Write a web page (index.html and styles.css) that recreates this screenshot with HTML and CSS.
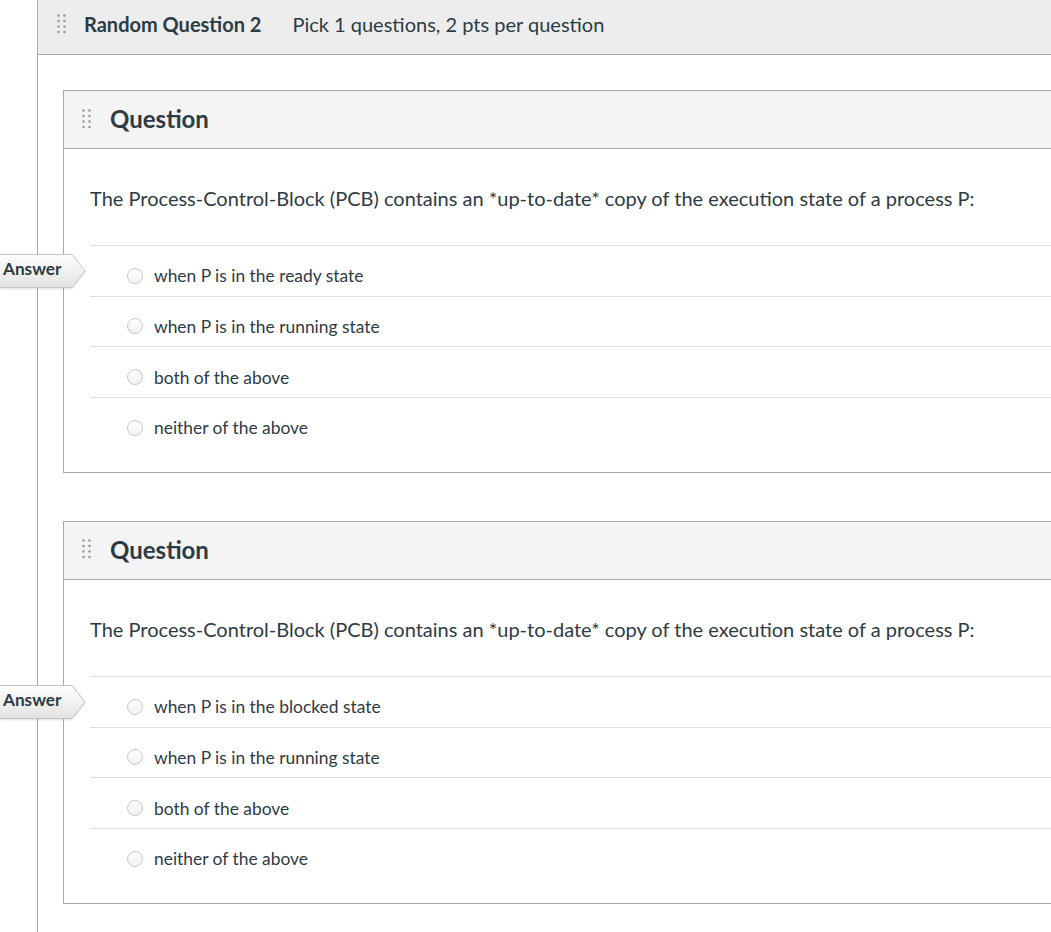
FILE: index.html
```html
<!DOCTYPE html>
<html>
<head>
<meta charset="utf-8">
<link rel="stylesheet" href="styles.css">
</head>
<body>
<div class="group">
  <div class="group-header">
    <svg class="handle" width="9" height="20" viewBox="0 0 9 20"><g fill="#959ba3"><circle cx="1.5" cy="1.5" r="1.3"/><circle cx="7.5" cy="1.5" r="1.3"/><circle cx="1.5" cy="7" r="1.3"/><circle cx="7.5" cy="7" r="1.3"/><circle cx="1.5" cy="12.5" r="1.3"/><circle cx="7.5" cy="12.5" r="1.3"/><circle cx="1.5" cy="18" r="1.3"/><circle cx="7.5" cy="18" r="1.3"/></g></svg>
    <span class="group-title">Random Question 2</span>
    <span class="group-info">Pick 1 questions, 2 pts per question</span>
  </div>
  <div class="group-body">
    <div class="question">
      <div class="q-header">
        <svg class="handle" width="9" height="20" viewBox="0 0 9 20"><g fill="#959ba3"><circle cx="1.5" cy="1.5" r="1.3"/><circle cx="7.5" cy="1.5" r="1.3"/><circle cx="1.5" cy="7" r="1.3"/><circle cx="7.5" cy="7" r="1.3"/><circle cx="1.5" cy="12.5" r="1.3"/><circle cx="7.5" cy="12.5" r="1.3"/><circle cx="1.5" cy="18" r="1.3"/><circle cx="7.5" cy="18" r="1.3"/></g></svg>
        <span class="q-title">Question</span>
      </div>
      <div class="q-body">
        <p class="q-text">The Process-Control-Block (PCB) contains an *up-to-date* copy of the execution state of a process P:</p>
        <div class="answers">
          <div class="answer-label">
            <svg class="label-bg" width="86" height="34" viewBox="0 0 86 34"><defs><linearGradient id="lg1" x1="0" y1="0" x2="0" y2="1"><stop offset="0" stop-color="#ffffff"/><stop offset="1" stop-color="#e2e2e2"/></linearGradient></defs><path d="M-2 0.5 H72 L85 17 L72 33.5 H-2 Z" fill="url(#lg1)" stroke="#c4c4c4" stroke-width="1"/></svg>
            <span class="label-text">Answer</span>
          </div>
          <div class="answer"><span class="radio"></span><span class="a-text">when P is in the ready state</span></div>
          <div class="answer"><span class="radio"></span><span class="a-text">when P is in the running state</span></div>
          <div class="answer"><span class="radio"></span><span class="a-text">both of the above</span></div>
          <div class="answer"><span class="radio"></span><span class="a-text">neither of the above</span></div>
        </div>
      </div>
    </div>
    <div class="question">
      <div class="q-header">
        <svg class="handle" width="9" height="20" viewBox="0 0 9 20"><g fill="#959ba3"><circle cx="1.5" cy="1.5" r="1.3"/><circle cx="7.5" cy="1.5" r="1.3"/><circle cx="1.5" cy="7" r="1.3"/><circle cx="7.5" cy="7" r="1.3"/><circle cx="1.5" cy="12.5" r="1.3"/><circle cx="7.5" cy="12.5" r="1.3"/><circle cx="1.5" cy="18" r="1.3"/><circle cx="7.5" cy="18" r="1.3"/></g></svg>
        <span class="q-title">Question</span>
      </div>
      <div class="q-body">
        <p class="q-text">The Process-Control-Block (PCB) contains an *up-to-date* copy of the execution state of a process P:</p>
        <div class="answers">
          <div class="answer-label">
            <svg class="label-bg" width="86" height="34" viewBox="0 0 86 34"><defs><linearGradient id="lg2" x1="0" y1="0" x2="0" y2="1"><stop offset="0" stop-color="#ffffff"/><stop offset="1" stop-color="#e2e2e2"/></linearGradient></defs><path d="M-2 0.5 H72 L85 17 L72 33.5 H-2 Z" fill="url(#lg2)" stroke="#c4c4c4" stroke-width="1"/></svg>
            <span class="label-text">Answer</span>
          </div>
          <div class="answer"><span class="radio"></span><span class="a-text">when P is in the blocked state</span></div>
          <div class="answer"><span class="radio"></span><span class="a-text">when P is in the running state</span></div>
          <div class="answer"><span class="radio"></span><span class="a-text">both of the above</span></div>
          <div class="answer"><span class="radio"></span><span class="a-text">neither of the above</span></div>
        </div>
      </div>
    </div>
  </div>
</div>
</body>
</html>
```
FILE: styles.css
```css
html, body {
  margin: 0;
  padding: 0;
  background: #ffffff;
  overflow: hidden;
}
body {
  font-family: Lato, "Open Sans", sans-serif;
  color: #2d3b45;
  height: 932px;
}
.group {
  margin-left: 37px;
  border-left: 1px solid #a9a9a9;
  min-height: 932px;
}
.group-header {
  background: #ededed;
  border-bottom: 1px solid #a9a9a9;
  display: flex;
  align-items: center;
  padding-left: 19px;
  padding-bottom: 6px;
  box-sizing: border-box;
  height: 55px;
}
.handle {
  display: block;
  flex: none;
}
.group-title {
  font-weight: bold;
  font-size: 20px;
  margin-left: 18px;
}
.group-info {
  font-size: 20px;
  margin-left: 31px;
}
.group-body {
  padding-top: 35px;
  padding-left: 25px;
}
.question {
  border: 1px solid #a9a9a9;
  border-right: none;
  margin-bottom: 48px;
}
.q-header {
  height: 58px;
  box-sizing: border-box;
  padding-bottom: 2px;
  background: #f4f4f4;
  border-bottom: 1px solid #a9a9a9;
  display: flex;
  align-items: center;
  padding-left: 18px;
}
.q-title {
  font-weight: bold;
  font-size: 24px;
  margin-left: 19px;
}
.q-body {
  padding: 0 0 24px 26px;
}
.q-text {
  margin: 0;
  font-size: 20px;
  line-height: 26px;
  padding-top: 36px;
  padding-bottom: 34px;
}
.answers {
  position: relative;
}
.answer {
  border-top: 1px solid #dedede;
  height: 49.67px;
  box-sizing: content-box;
  display: flex;
  align-items: center;
  padding-left: 37px;
  font-size: 17.4px;
}
.answer .radio,
.answer .a-text {
  position: relative;
  top: 5px;
}
.answers .answer:last-child {
  height: 50px;
}
.radio {
  width: 14px;
  height: 14px;
  border: 1px solid #c9c9c9;
  border-radius: 50%;
  background: linear-gradient(#ffffff, #f1f1f1);
  flex: none;
  margin-right: 11px;
}
.answer-label {
  position: absolute;
  left: -90px;
  top: 9px;
  width: 86px;
  height: 34px;
}
.label-bg {
  position: absolute;
  left: 0;
  top: 0;
  filter: drop-shadow(0 1px 1px rgba(0,0,0,0.12));
}
.label-text {
  position: absolute;
  left: 3px;
  top: 4px;
  font-weight: bold;
  font-size: 17.2px;
  line-height: 22px;
  color: #2d3b45;
}
```
